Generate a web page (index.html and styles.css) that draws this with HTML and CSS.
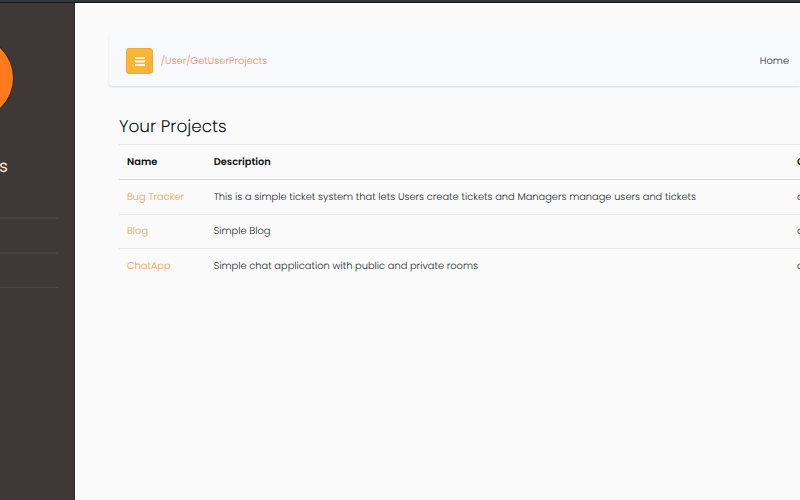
FILE: index.html
```html
<!DOCTYPE html>
<html lang="en">
<head>
<meta charset="utf-8">
<title>Your Projects</title>
<link rel="stylesheet" href="styles.css">
</head>
<body>
<div class="topbar"></div>
<div class="shell">
  <aside class="sidebar">
    <div class="avatar"></div>
    <div class="username">s</div>
    <ul class="menu"><li></li><li></li><li></li></ul>
  </aside>
  <main class="content">
    <nav class="navbar">
      <button class="toggle" aria-label="Menu"><svg width="10" height="9" viewBox="0 0 10 9"><path d="M0 1h10M0 4.5h10M0 8h10" stroke="#fff9df" stroke-width="2"/></svg></button>
      <span class="path">/User/GetUserProjects</span>
      <a class="home">Home</a>
    </nav>
    <section class="projects">
      <h1>Your Projects</h1>
      <div class="row head"><b>Name</b><b>Description</b><b>C</b></div>
      <div class="row"><a>Bug Tracker</a><span>This is a simple ticket system that lets Users create tickets and Managers manage users and tickets</span><span>d</span></div>
      <div class="row"><a>Blog</a><span>Simple Blog</span><span>d</span></div>
      <div class="row"><a>ChatApp</a><span>Simple chat application with public and private rooms</span><span>d</span></div>
    </section>
  </main>
</div>
</body>
</html>
```
FILE: styles.css
```css
* { box-sizing: border-box; }
body {
  margin: 0;
  height: 500px;
  overflow: hidden;
  background: #fafafa;
  color: #26292c;
  font: 300 9.83px/15px Poppins, Inter, "Open Sans", sans-serif;
  text-rendering: geometricPrecision;
}
.topbar { height: 3px; background: #35363a; border-bottom: 1px solid #17181b; }
.shell { display: flex; height: 497px; }
.sidebar {
  flex: 0 0 75px;
  overflow: hidden;
  background: #3e3938;
  border-right: 1px solid #2c2827;
}
.avatar {
  width: 82px;
  height: 82px;
  margin: 34px 0 0 -69px;
  border-radius: 50%;
  background: #ff7a1a;
  box-shadow: 0 0 0 1px #342b26;
}
.username {
  height: 24px;
  margin-top: 35px;
  color: #ffe4c4;
  font-size: 17px;
  line-height: 24px;
  font-weight: 400;
  margin-left: -1px;
}
.menu { list-style: none; margin: 5px 16px 0 0; padding: 0; }
.menu li { height: 35px; border-bottom: 1px solid #4b4746; }
.menu li:first-child { border-bottom: 2px solid #474342; height: 36px; }
.menu li:nth-child(2) { border-bottom: 2px solid #474342; }
.menu li:last-child { height: 34px; }
.content { flex: 1; min-width: 0; overflow: hidden; padding: 31px 0 0 34px; }
.navbar {
  display: flex;
  align-items: center;
  height: 52px;
  padding: 2px 11px 0 17px;
  background: #f8f9fa;
  border-radius: 3px 0 0 3px;
  box-shadow: 0 1px 2px rgba(0, 0, 0, .12);
}
.toggle {
  display: flex;
  align-items: center;
  justify-content: center;
  width: 27px;
  height: 26px;
  padding: 0;
  border: 1px solid #f2ab31;
  border-radius: 3px;
  background: #fab438;
}
.path { margin-left: 7.7px; color: #ee8b68; }
.home { margin-left: auto; }
.projects { padding: 27px 0 0 10px; }
h1 {
  height: 31px;
  margin: 0;
  color: #0c0f12;
  font-size: 16.9px;
  font-weight: 300;
  line-height: 27px;
}
.row {
  display: grid;
  grid-template-columns: 86.7px 583.3px 1fr;
  align-items: center;
  height: 34.5px;
  padding: 1px 0 0 8px;
  border-top: 1px solid #e7e8ea;
  white-space: nowrap;
}
.row a { color: #f2a04f; }
.head { color: #111; height: 35px; }
.head b { font-weight: 600; }
.head + .row { border-top-color: #d7d9dc; }
```
